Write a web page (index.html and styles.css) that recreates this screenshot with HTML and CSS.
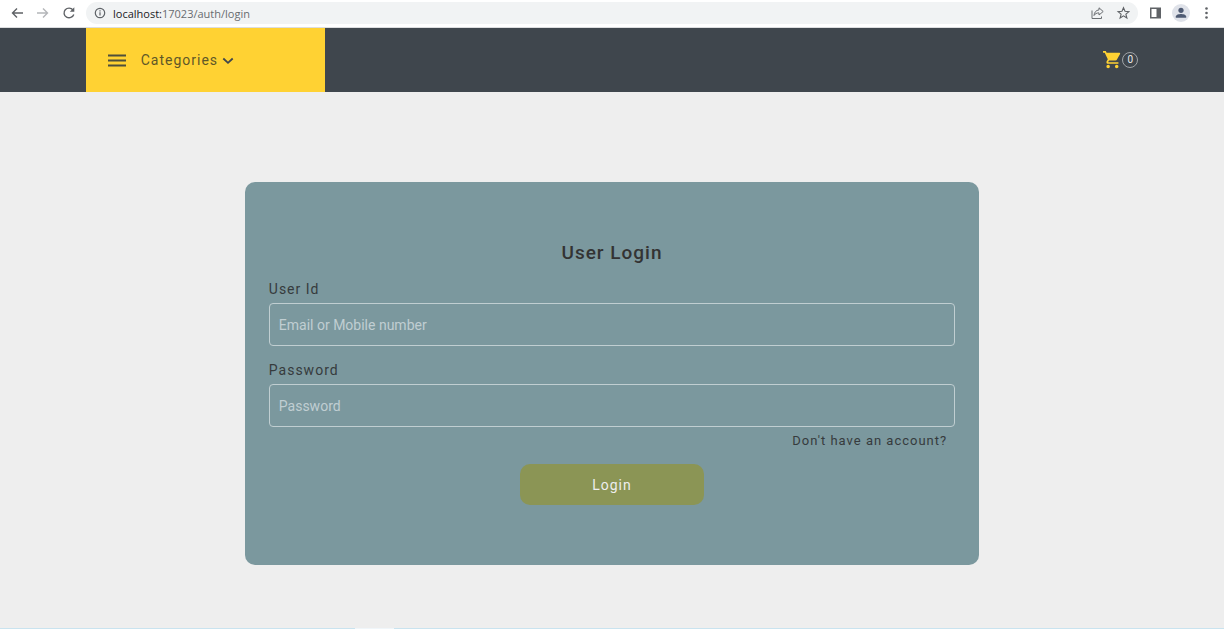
FILE: index.html
```html
<!DOCTYPE html>
<html lang="en">
<head>
<meta charset="utf-8">
<meta name="viewport" content="width=device-width, initial-scale=1">
<title>User Login</title>
<link rel="stylesheet" href="styles.css">
</head>
<body>
<div class="browser-bar">
  <div class="nav-buttons">
    <button class="icon-button" type="button" aria-label="Back"><svg viewBox="0 0 14 14"><path d="M13 7H2.500M7 2.500 2.500 7 7 11.500" fill="none" stroke="#5f6266" stroke-width="1.400"/></svg></button>
    <button class="icon-button" type="button" aria-label="Forward"><svg viewBox="0 0 14 14"><path d="M1 7h10.500M7 2.500 11.500 7 7 11.500" fill="none" stroke="#b4b6b9" stroke-width="1.400"/></svg></button>
    <button class="icon-button" type="button" aria-label="Reload"><svg viewBox="0 0 14 14"><path d="M11 4A5 4.800 0 1 0 11.800 8.500" fill="none" stroke="#5f6266" stroke-width="1.400"/><path d="M12.300 1.300v4.500H7.800z" fill="#5f6266"/></svg></button>
  </div>
  <div class="address">
    <svg class="info" viewBox="0 0 12 12" aria-hidden="true"><circle cx="6" cy="6" r="4.700" fill="none" stroke="#5f6368" stroke-width="1.200"/><path d="M6 5.300v3.300M6 3.200v1.200" stroke="#5f6368" stroke-width="1.200"/></svg>
    <span class="url"><span class="host">localhost:</span>17023/auth/login</span>
    <button class="icon-button" type="button" aria-label="Share"><svg viewBox="0 0 14 14"><path d="M2 4.500v8h9.500v-2" fill="none" stroke="#6b6e72"/><path d="M9 1.800 13.200 5.500 9 9V6.900C6.500 6.900 5 7.800 4 9.500 4.300 6.300 6 4.200 9 3.900z" fill="none" stroke="#6b6e72" stroke-linejoin="round"/></svg></button>
    <button class="icon-button" type="button" aria-label="Bookmark"><svg viewBox="0 0 14 14"><path d="m7.500 1.700 1.500 3.600 3.900.3-3 2.500 1 3.900-3.400-2.100L4.100 12l1-3.900-3-2.500 3.900-.3z" fill="none" stroke="#5f6266" stroke-width="1.100"/></svg></button>
  </div>
  <div class="tools">
    <button class="icon-button" type="button" aria-label="Side panel"><svg viewBox="0 0 14 14"><path d="M2 1.500h11v11H2zM3.500 3v8h5V3z" fill="#5f6266" fill-rule="evenodd"/></svg></button>
    <button class="icon-button profile" type="button" aria-label="Profile"><svg viewBox="0 0 14 14"><circle cx="7" cy="4.300" r="2.600" fill="#4f5b73"/><path d="M1.800 11.800v-1.300C1.800 8.800 5 8 7 8s5.200.8 5.200 2.500v1.300z" fill="#4f5b73"/></svg></button>
    <button class="icon-button" type="button" aria-label="Menu"><svg viewBox="0 0 14 14" fill="#5f6266"><circle cx="6.500" cy="2.500" r="1.300"/><circle cx="6.500" cy="7" r="1.300"/><circle cx="6.500" cy="11.500" r="1.300"/></svg></button>
  </div>
</div>

<header class="site-header">
  <button class="categories" type="button">
    <svg class="burger" viewBox="0 0 18 18" aria-hidden="true"><path d="M0 4.500h18M0 9.500h18M0 14.500h18" stroke="#4e4f3b" stroke-width="1.800"/></svg>
    <span>Categories</span>
    <svg class="chevron" viewBox="0 0 12 12" aria-hidden="true"><path d="m1.300 4.500 4.700 4.300 4.700-4.300" fill="none" stroke="#3f464d" stroke-width="1.800"/></svg>
  </button>
  <a class="cart" href="#" aria-label="Cart, 0 items">
    <svg class="cart-icon" viewBox="1 2 21 21" aria-hidden="true"><path fill="#ffd233" d="M7 18c-1.100 0-2 .9-2 2s.9 2 2 2 2-.9 2-2-.9-2-2-2M1 2v2h2l3.600 7.590-1.350 2.450c-.16.28-.25.610-.25.960 0 1.100.9 2 2 2h12v-2H7.420c-.14 0-.25-.110-.25-.25l.03-.12.9-1.630h7.450c.75 0 1.410-.41 1.750-1.030l3.580-6.490A1 1 0 0 0 20 4H5.210l-.94-2zm16 16c-1.100 0-2 .9-2 2s.9 2 2 2 2-.9 2-2-.9-2-2-2"/></svg>
    <span class="count">0</span>
  </a>
</header>

<main class="page">
  <form class="login-card">
    <h1 class="title">User Login</h1>
    <label class="label" for="user">User Id</label>
    <input class="field" id="user" type="text" placeholder="Email or Mobile number">
    <label class="label" for="password">Password</label>
    <input class="field last" id="password" type="password" placeholder="Password">
    <a class="signup" href="#">Don't have an account?</a>
    <button class="submit" type="submit">Login</button>
  </form>
</main>
<div class="taskbar"><span class="task"></span></div>
</body>
</html>
```
FILE: styles.css
```css
* {
  box-sizing: border-box;
}

body {
  display: flex;
  flex-direction: column;
  min-height: 100vh;
  margin: 0;
  background: #eee;
  color: #363b3d;
  font-family: Roboto, sans-serif;
  font-size: 14px;
}

button,
input {
  font-family: inherit;
}

svg {
  display: block;
}

.browser-bar {
  display: flex;
  align-items: center;
  height: 28px;
  padding: 0 10px 1px;
  background: #fff;
  border-bottom: 1px solid #dcdddf;
}

.nav-buttons {
  display: flex;
  gap: 12px;
}

.icon-button {
  width: 14px;
  height: 14px;
  padding: 0;
  border: 0;
  background: none;
}

.address {
  display: flex;
  flex: 1;
  align-items: center;
  gap: 12px;
  height: 22px;
  margin: 0 10px;
  padding: 0 8px;
  border-radius: 11px;
  background: #f1f3f4;
}

.info {
  width: 12px;
  height: 12px;
}

.url {
  flex: 1;
  margin-left: -5px;
  color: #686c70;
  font-family: "Open Sans", sans-serif;
  font-size: 11px;
}

.host {
  color: #202124;
}

.tools {
  display: flex;
  align-items: center;
  gap: 10px;
}

.profile {
  width: 18px;
  height: 18px;
  padding: 2px;
  border-radius: 50%;
  background: #dfe2e9;
}

.site-header {
  display: flex;
  align-items: center;
  justify-content: space-between;
  height: 64px;
  padding: 0 7%;
  background: #3f464d;
}

.categories {
  display: flex;
  align-items: center;
  align-self: stretch;
  width: 239px;
  padding: 0 22px;
  border: 0;
  background: #ffd233;
  color: #5f5828;
  font-size: 14px;
  letter-spacing: 1px;
}

.burger {
  width: 18px;
  height: 18px;
  margin-right: 15px;
}

.chevron {
  width: 12px;
  height: 12px;
  margin-left: 4px;
}

.cart {
  display: flex;
  align-items: center;
  gap: 1px;
  color: #eee;
  text-decoration: none;
}

.cart-icon {
  width: 18px;
  height: 18px;
}

.count {
  width: 16px;
  height: 16px;
  border: 1px solid #a0a4a8;
  border-radius: 50%;
  font-size: 10px;
  line-height: 14px;
  text-align: center;
}

.page {
  flex: 1;
  padding: 90px 20% 60px;
}

.login-card {
  display: flex;
  flex-direction: column;
  padding: 60px 24px;
  border-radius: 10px;
  background: #7b989e;
}

.title {
  margin: 0 0 15px;
  color: #333;
  font-size: 19px;
  font-weight: 500;
  line-height: 22px;
  letter-spacing: 1px;
  text-align: center;
}

.label {
  margin-bottom: 4px;
  line-height: 20px;
  letter-spacing: 1px;
}

.field {
  width: 100%;
  height: 43px;
  margin: 0 0 14px;
  padding: 0 9px;
  border: 1px solid #c0ced1;
  border-radius: 4px;
  outline: 0;
  background: transparent;
  color: #333;
  font-size: 14px;
}

.field::placeholder {
  color: #c0ced2;
  opacity: 1;
}

.last {
  margin-bottom: 4px;
}

.signup {
  align-self: flex-end;
  margin-right: 8px;
  color: #363b3d;
  font-size: 13px;
  line-height: 20px;
  letter-spacing: 1px;
  text-decoration: none;
}

.submit {
  align-self: center;
  width: 184px;
  height: 41px;
  margin-top: 13px;
  border: 0;
  border-radius: 10px;
  background: #8b9555;
  color: #eee;
  font-size: 14px;
  letter-spacing: 1px;
}

.taskbar {
  display: flex;
  height: 1px;
  background: #c9e3ef;
}

.task {
  width: 39px;
  margin-left: 29%;
  background: #f0f6fa;
}
```
